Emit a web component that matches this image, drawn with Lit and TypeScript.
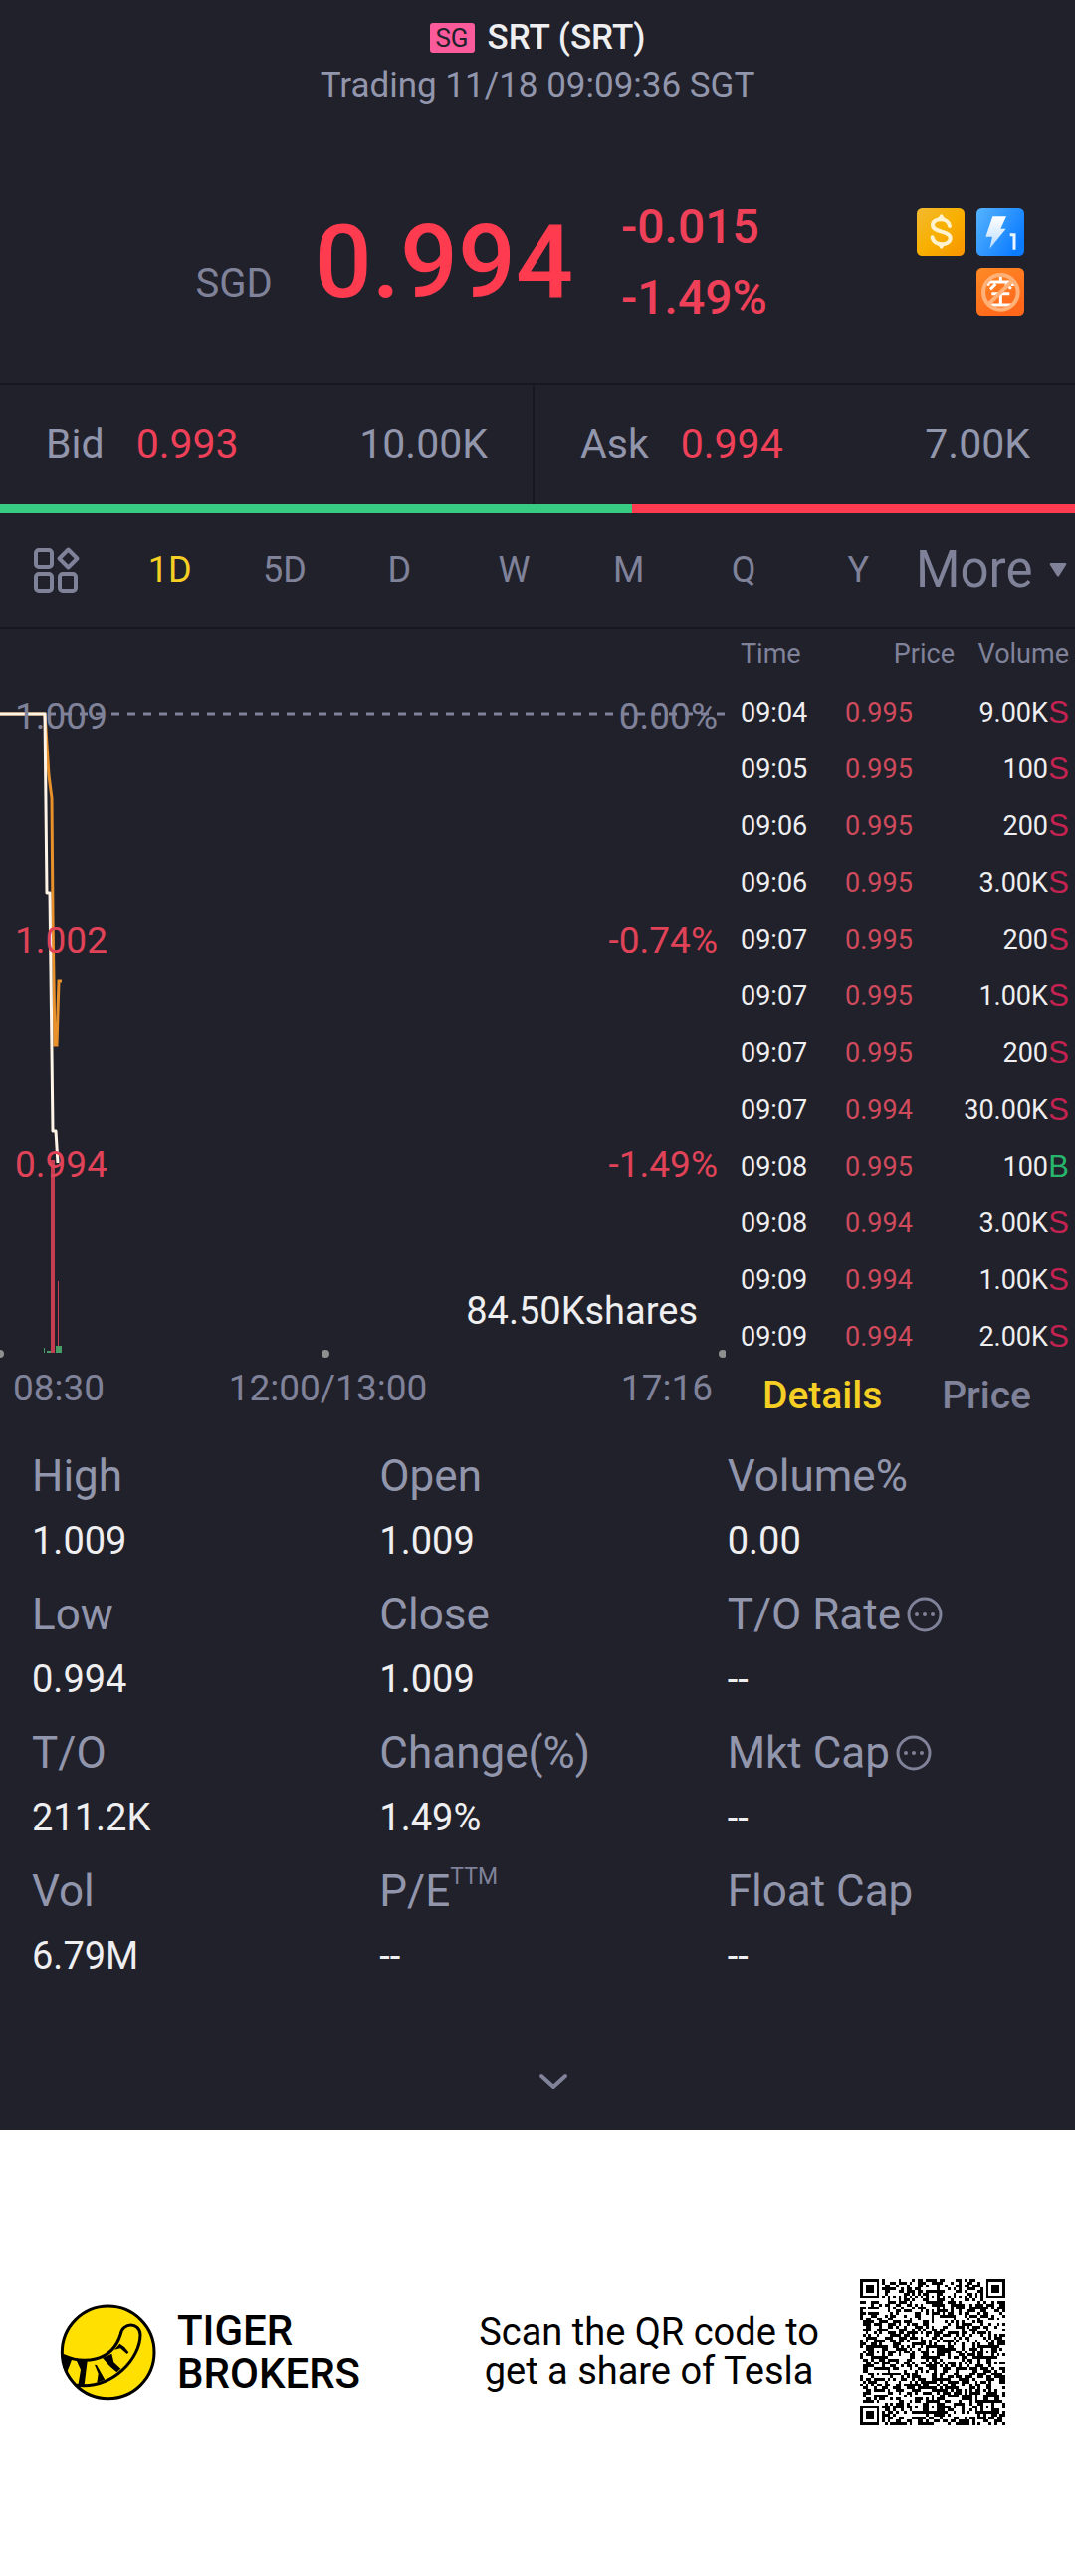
import { LitElement, html, svg, css } from "lit";
import { customElement, state } from "lit/decorators.js";
import { classMap } from "lit/directives/class-map.js";

type Side = "S" | "B";
interface Trade {
  time: string;
  price: string;
  volume: string;
  side: Side;
}
interface Stat {
  label: string;
  value: string;
  info?: boolean;
  sup?: string;
}

const trade = (time: string, price: string, volume: string, side: Side = "S"): Trade => ({
  time,
  price,
  volume,
  side,
});

const TRADES: Trade[] = [
  trade("09:04", "0.995", "9.00K"),
  trade("09:05", "0.995", "100"),
  trade("09:06", "0.995", "200"),
  trade("09:06", "0.995", "3.00K"),
  trade("09:07", "0.995", "200"),
  trade("09:07", "0.995", "1.00K"),
  trade("09:07", "0.995", "200"),
  trade("09:07", "0.994", "30.00K"),
  trade("09:08", "0.995", "100", "B"),
  trade("09:08", "0.994", "3.00K"),
  trade("09:09", "0.994", "1.00K"),
  trade("09:09", "0.994", "2.00K"),
];

const STATS: Stat[] = [
  { label: "High", value: "1.009" },
  { label: "Open", value: "1.009" },
  { label: "Volume%", value: "0.00" },
  { label: "Low", value: "0.994" },
  { label: "Close", value: "1.009" },
  { label: "T/O Rate", value: "--", info: true },
  { label: "T/O", value: "211.2K" },
  { label: "Change(%)", value: "1.49%" },
  { label: "Mkt Cap", value: "--", info: true },
  { label: "Vol", value: "6.79M" },
  { label: "P/E", value: "--", sup: "TTM" },
  { label: "Float Cap", value: "--" },
];

const PERIODS = ["1D", "5D", "D", "W", "M", "Q", "Y"];

/** Builds the module path of a 53 x 53 code: finders, alignment marks, timing rows, data. */
function qrPath(): string {
  const n = 53;
  const grid: boolean[][] = [];
  let seed = 20231118;
  for (let y = 0; y < n; y++) {
    grid.push([]);
    for (let x = 0; x < n; x++) {
      seed = (Math.imul(seed, 1664525) + 1013904223) >>> 0;
      grid[y].push(seed >>> 16 < 33400);
    }
  }
  for (let i = 0; i < n; i++) {
    grid[6][i] = i % 2 === 0;
    grid[i][6] = i % 2 === 0;
  }
  const mark = (cx: number, cy: number, r: number, quiet: number) => {
    for (let y = cy - quiet; y <= cy + quiet; y++) {
      for (let x = cx - quiet; x <= cx + quiet; x++) {
        if (x < 0 || y < 0 || x >= n || y >= n) continue;
        const d = Math.max(Math.abs(x - cx), Math.abs(y - cy));
        grid[y][x] = r === 3 ? d <= 1 || d === 3 : d === 0 || d === 2;
      }
    }
  };
  mark(3, 3, 3, 4);
  mark(n - 4, 3, 3, 4);
  mark(3, n - 4, 3, 4);
  for (const [x, y] of [[26, 6], [6, 26], [26, 26], [46, 26], [26, 46], [46, 46]]) {
    mark(x, y, 2, 2);
  }
  let d = "";
  grid.forEach((row, y) => {
    let x = 0;
    while (x < n) {
      if (!row[x]) {
        x++;
        continue;
      }
      let end = x;
      while (end < n && row[end]) end++;
      d += `M${x} ${y}h${end - x}v1h${x - end}z`;
      x = end;
    }
  });
  return d;
}

const QR = qrPath();

@customElement("quote-header")
class QuoteHeader extends LitElement {
  static styles = css`
    :host { display: block; }
    h1, p { margin: 0; }
    .top { display: flex; flex-direction: column; align-items: center; padding-top: 14px; }
    .title { display: flex; align-items: center; gap: 13px; font-size: 35px; line-height: 48px; font-weight: 500; color: #efeff1; }
    .market { width: 45px; height: 30px; border-radius: 3px; background: #fb5a9b; color: #21212b; font-size: 26px; line-height: 31px; font-weight: 400; text-align: center; }
    .status { font-size: 35px; line-height: 48px; color: #9296ac; }
    .quote { display: grid; grid-template-columns: 624fr 405fr; align-items: center; padding: 82px 51px 51px 0; }
    .last { display: flex; justify-content: flex-end; align-items: baseline; gap: 42px; padding-right: 48px; }
    .currency { font-size: 40px; color: #7f8299; }
    .price { font-size: 102px; line-height: 104px; font-weight: 500; color: #ff3b50; }
    .side { display: flex; justify-content: space-between; align-items: center; }
    .change { font-size: 48px; line-height: 71px; color: #ee4058; font-weight: 500; }
    .badges { display: grid; grid-template-columns: 48px 48px; gap: 12px; }
    .badges svg { width: 48px; height: 48px; display: block; }
    .badges svg:last-child { grid-column: 2; }
  `;

  render() {
    return html`
      <div class="top">
        <h1 class="title"><span class="market">SG</span>SRT (SRT)</h1>
        <p class="status">Trading 11/18 09:09:36 SGT</p>
      </div>
      <div class="quote">
        <div class="last"><span class="currency">SGD</span><span class="price">0.994</span></div>
        <div class="side">
          <div class="change"><div>-0.015</div><div>-1.49%</div></div>
          <div class="badges">
            <svg viewBox="0 0 144 144" role="img" aria-label="Dividend">
              <defs>
                <linearGradient id="gold" x1="0" y1="0" x2="1" y2="1">
                  <stop offset="0" stop-color="#f2b931" /><stop offset=".5" stop-color="#f8b000" /><stop offset="1" stop-color="#f89400" />
                </linearGradient>
              </defs>
              <rect width="144" height="144" rx="16" fill="url(#gold)" />
              <path d="M99 54C95 27 48 28 48 51C48 75 101 67 101 90C101 114 52 116 47 88" fill="none" stroke="#fff3cf" stroke-width="12" stroke-linecap="round" />
              <path d="M62 34L70 21q4-4 8 0L86 34zM62 107l8 13q4 4 8 0l8-13z" fill="#fff3cf" />
            </svg>
            <svg viewBox="0 0 144 144" role="img" aria-label="Level 1 quotes">
              <defs>
                <linearGradient id="blue" x1="0" y1="0" x2="1" y2=".6">
                  <stop offset="0" stop-color="#55b3ff" /><stop offset=".6" stop-color="#2b93ff" /><stop offset="1" stop-color="#0c7cff" />
                </linearGradient>
                <linearGradient id="bolt" x1="0" y1="0" x2="0" y2="1">
                  <stop offset="0" stop-color="#fff" /><stop offset="1" stop-color="#b9dcff" />
                </linearGradient>
              </defs>
              <rect width="144" height="144" rx="16" fill="url(#blue)" />
              <path d="M49 25H90L73 62H89L40 122L48 86H28Z" fill="url(#bolt)" />
              <path d="M101 80h13v45" fill="none" stroke="#e9f4ff" stroke-width="9" />
            </svg>
            <svg viewBox="0 0 144 144" role="img" aria-label="No short selling">
              <defs>
                <linearGradient id="orange" x1="0" y1="0" x2=".5" y2="1">
                  <stop offset="0" stop-color="#ff8a26" /><stop offset="1" stop-color="#ff671a" />
                </linearGradient>
              </defs>
              <rect width="144" height="144" rx="16" fill="url(#orange)" />
              <path d="M73 27v13M36 53V42h73v12M58 48L42 64M87 48l18 14M46 77h54M73 78v32M39 111h69" fill="none" stroke="#fff" stroke-width="9" />
              <circle cx="73" cy="73" r="52" fill="none" stroke="#ffb178" stroke-width="12" />
              <path d="M36 109L110 37" stroke="#ffb178" stroke-width="12" />
            </svg>
          </div>
        </div>
      </div>
    `;
  }
}

@customElement("bid-ask")
class BidAsk extends LitElement {
  static styles = css`
    :host { display: block; border-top: 2px solid #171720; font-size: 41px; color: #9296ac; }
    .cells { display: grid; grid-template-columns: 537fr 543fr; }
    .cell { display: grid; grid-template-columns: auto auto 1fr; column-gap: 32px; line-height: 119px; padding: 0 45px 0 46px; }
    .cell:first-child { border-right: 2px solid #171720; }
    .price { color: #ee4058; }
    .size { text-align: right; }
    .ratio { display: flex; height: 9px; }
    .buy { background: #37cc82; flex: 635; }
    .sell { background: #ff3b50; flex: 445; }
  `;

  render() {
    return html`
      <div class="cells">
        <div class="cell"><span>Bid</span><span class="price">0.993</span><span class="size">10.00K</span></div>
        <div class="cell"><span>Ask</span><span class="price">0.994</span><span class="size">7.00K</span></div>
      </div>
      <div class="ratio"><div class="buy"></div><div class="sell"></div></div>
    `;
  }
}

@customElement("period-bar")
class PeriodBar extends LitElement {
  @state() private active = "1D";

  static styles = css`
    :host { display: grid; grid-template-columns: 113fr 807fr 160fr; align-items: center; height: 115px; border-bottom: 2px solid #171720; }
    button { appearance: none; margin: 0; padding: 0; border: 0; background: none; font: inherit; color: #7f8299; cursor: pointer; }
    .layout { padding-left: 32px; text-align: left; }
    .layout svg { display: block; width: 49px; height: 48px; }
    .periods { display: grid; grid-template-columns: repeat(7, 1fr); }
    .period { font-size: 36px; line-height: 48px; }
    .period.active { color: #f5cf23; }
    .more { display: flex; align-items: center; justify-content: space-between; padding-right: 8px; font-size: 51px; line-height: 64px; }
    .more svg { width: 18px; height: 15px; }
  `;

  render() {
    return html`
      <button class="layout" aria-label="Chart layout">
        <svg viewBox="0 0 49 48" fill="none" stroke="#7f8299" stroke-width="4">
          <rect x="4" y="4" width="16" height="17" rx="3" />
          <rect x="4" y="28" width="16" height="17" rx="3" />
          <rect x="28" y="28" width="16" height="17" rx="3" />
          <path d="M36.500 3.500L45.500 12.500L36.500 21.500L27.500 12.500Z" stroke-linejoin="round" />
        </svg>
      </button>
      <div class="periods">
        ${PERIODS.map(
          (p) => html`<button
            class=${classMap({ period: true, active: p === this.active })}
            @click=${() => (this.active = p)}
          >${p}</button>`,
        )}
      </div>
      <button class="more">More<svg viewBox="0 0 18 15"><path d="M2 1h14q2 0 1 2L10 14q-1 1-2 0L1 3q-1-2 1-2z" fill="#7f8299" /></svg></button>
    `;
  }
}

@customElement("intraday-chart")
class IntradayChart extends LitElement {
  static styles = css`
    :host { display: flex; flex-direction: column; color: #7f8299; }
    .plot { display: grid; }
    .plot > * { grid-area: 1 / 1; }
    svg { display: block; width: 100%; height: 739px; }
    .scale { display: grid; grid-template-rows: 225px 225px 147px 48px; padding: 64px 8px 30px 15px; font-size: 37px; line-height: 48px; }
    .level { display: flex; justify-content: space-between; }
    .down { color: #e04358; }
    .shares { color: #efeff1; text-align: right; padding-right: 20px; font-size: 38px; }
    .axis { display: grid; grid-template-columns: 1fr auto 1fr; padding: 0 13px; font-size: 37px; line-height: 48px; }
    .axis span:last-child { text-align: right; }
    .middle { margin-right: 70px; }
  `;

  render() {
    return html`
      <div class="plot">
        <svg viewBox="0 0 729 739" preserveAspectRatio="none" aria-hidden="true">
          <path d="M48 85H729" stroke="#7f8299" stroke-width="3" stroke-dasharray="8 8" />
          <path d="M51 533h4v194h-4z" fill="#c23e50" />
          <path d="M58 655h1v72h-1z" fill="#c23e50" />
          <path d="M44 722h1v5h-1zM47 725h4v2h-4zM56 720h6v7h-6z" fill="#4a9c66" />
          <path d="M0 85H45L49 147L52 170L53 290L55 418H57L59 354H62" fill="none" stroke="#e8902a" stroke-width="3" />
          <path d="M0 85H45L47 265H50L53 504H56L58 536" fill="none" stroke="#fff4e8" stroke-width="3" stroke-linejoin="round" />
          ${[0, 327, 726].map((x) => svg`<circle cx=${x} cy="728" r="4" fill="#8f8f8f" />`)}
        </svg>
        <div class="scale">
          <div class="level"><span>1.009</span><span>0.00%</span></div>
          <div class="level down"><span>1.002</span><span>-0.74%</span></div>
          <div class="level down"><span>0.994</span><span>-1.49%</span></div>
          <div class="shares">84.50Kshares</div>
        </div>
      </div>
      <div class="axis"><span>08:30</span><span class="middle">12:00/13:00</span><span>17:16</span></div>
    `;
  }
}

@customElement("trade-list")
class TradeList extends LitElement {
  @state() private tab = "Details";

  static styles = css`
    :host { display: block; }
    table { width: 100%; border-collapse: collapse; table-layout: fixed; font-size: 27px; color: #efeff1; }
    .col-time { width: 120px; }
    .col-price { width: 110px; }
    .col-side { width: 27px; }
    th { height: 49px; padding: 0 0 6px; font-weight: 400; color: #7f8299; text-align: right; }
    td { height: 57px; padding: 0; }
    .time { padding-left: 15px; text-align: left; }
    .volume { text-align: right; }
    th.volume { padding-right: 6px; }
    td.side { padding-right: 6px; text-align: right; font-family: "Liberation Sans", Arial, sans-serif; font-size: 31px; color: #c42250; }
    td.side.buy { color: #27b56c; }
    td.price { color: #cf4a5c; }
    .tabs { display: flex; justify-content: space-between; padding: 0 44px 0 37px; }
    button { appearance: none; margin: 0; padding: 0; border: 0; background: none; font: inherit; font-size: 39px; line-height: 62px; font-weight: 500; color: #7f8299; cursor: pointer; }
    button.active { color: #f5cf23; }
  `;

  render() {
    return html`
      <table>
        <colgroup>
          <col class="col-time" />
          <col class="col-price" />
          <col />
          <col class="col-side" />
        </colgroup>
        <thead>
          <tr>
            <th class="time">Time</th>
            <th class="price">Price</th>
            <th class="volume" colspan="2">Volume</th>
          </tr>
        </thead>
        <tbody>
          ${TRADES.map(
            (t) => html`<tr>
              <td class="time">${t.time}</td>
              <td class="price">${t.price}</td>
              <td class="volume">${t.volume}</td>
              <td class=${classMap({ side: true, buy: t.side === "B" })}>${t.side}</td>
            </tr>`,
          )}
        </tbody>
      </table>
      <div class="tabs">
        ${["Details", "Price"].map(
          (name) => html`<button
            class=${classMap({ active: name === this.tab })}
            @click=${() => (this.tab = name)}
          >${name}</button>`,
        )}
      </div>
    `;
  }
}

@customElement("key-stats")
class KeyStats extends LitElement {
  static styles = css`
    :host { display: block; }
    dl { display: grid; grid-template-columns: repeat(3, 1fr); row-gap: 9px; margin: 0; padding: 18px 0 46px 32px; }
    dt { display: flex; align-items: center; gap: 6px; font-size: 44px; line-height: 64px; color: #9296ac; }
    dd { margin: 0; font-size: 38px; line-height: 66px; color: #efeff1; }
    sup { font-size: 23px; line-height: 24px; vertical-align: 22px; color: #7f8299; }
    dt svg { width: 36px; height: 36px; }
    .expand { appearance: none; display: block; width: 100%; height: 96px; margin: 0; padding: 2px 0 0 31px; border: 0; background: none; cursor: pointer; }
    .expand svg { width: 32px; height: 20px; }
  `;

  render() {
    return html`
      <dl>
        ${STATS.map(
          (s) => html`<div>
            <dt>
              <span>${s.label}${s.sup ? html`<sup>${s.sup}</sup>` : ""}</span>
              ${s.info
                ? html`<svg viewBox="0 0 36 36" role="img" aria-label="More information">
                    <circle cx="18" cy="18" r="16" fill="none" stroke="#7f8299" stroke-width="3" />
                    <circle cx="10" cy="18" r="2" fill="#7f8299" />
                    <circle cx="18" cy="18" r="2" fill="#7f8299" />
                    <circle cx="26" cy="18" r="2" fill="#7f8299" />
                  </svg>`
                : ""}
            </dt>
            <dd>${s.value}</dd>
          </div>`,
        )}
      </dl>
      <button class="expand" aria-label="Show more">
        <svg viewBox="0 0 32 20"><path d="M4 4L16 15L28 4" fill="none" stroke="#7f8299" stroke-width="4" stroke-linecap="round" stroke-linejoin="round" /></svg>
      </button>
    `;
  }
}

@customElement("share-footer")
class ShareFooter extends LitElement {
  static styles = css`
    :host { display: flex; align-items: center; padding: 150px 70px 152px 60px; background: #fff; color: #000; }
    .logo { width: 97px; height: 97px; }
    .brand { margin-left: 21px; font-size: 42px; line-height: 43px; font-weight: 500; }
    .invite { margin: 0 41px 0 auto; font-size: 38px; line-height: 39px; text-align: center; }
    .qr { width: 146px; height: 146px; }
  `;

  render() {
    return html`
      <svg class="logo" viewBox="59 75 291 291" role="img" aria-label="Tiger Brokers logo">
        <circle cx="205" cy="220" r="139" fill="#ffe000" stroke="#000" stroke-width="9" />
        <path d="M69 229C125 254 215 255 243 165C248 130 300 128 302 167C302 236 222 331 110 319" fill="none" stroke="#000" stroke-width="9" />
        <path d="M66 227L96 240L82 277L69 266Z" />
        <path d="M109 244L142 246L133 318L114 320L122 272Z" />
        <path d="M164 257L170 258L195 302L171 311L175 284Z" />
        <path d="M188 237L216 224L222 250L243 269L231 280L210 262Z" />
        <path d="M224 212L240 194L254 204L267 220L262 225L242 208Z" />
      </svg>
      <div class="brand">TIGER<br />BROKERS</div>
      <p class="invite">Scan the QR code to<br />get a share of Tesla</p>
      <svg class="qr" viewBox="0 0 53 53" shape-rendering="crispEdges" role="img" aria-label="QR code"><path d=${QR} /></svg>
    `;
  }
}

@customElement("app-root")
class AppRoot extends LitElement {
  static styles = css`
    :host { display: block; background: #21212b; font-family: Roboto, "Noto Sans", sans-serif; }
    .market { display: grid; grid-template-columns: 729fr 351fr; }
  `;

  render() {
    return html`
      <main>
        <quote-header></quote-header>
        <bid-ask></bid-ask>
        <period-bar></period-bar>
        <section class="market">
          <intraday-chart></intraday-chart>
          <trade-list></trade-list>
        </section>
        <key-stats></key-stats>
      </main>
      <share-footer></share-footer>
    `;
  }
}
